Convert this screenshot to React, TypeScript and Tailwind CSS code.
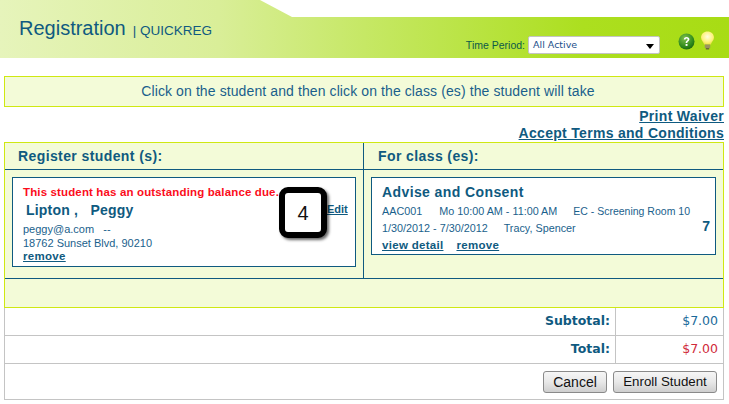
function HelpIcon() {
  return (
    <svg width="17" height="17" viewBox="0 0 17 17">
      <defs>
        <radialGradient id="helpGreen" cx="40%" cy="30%" r="75%">
          <stop offset="0%" stopColor="#7fc04a" />
          <stop offset="70%" stopColor="#2f8a1c" />
          <stop offset="100%" stopColor="#1c6410" />
        </radialGradient>
      </defs>
      <circle cx="8.5" cy="8.5" r="8" fill="url(#helpGreen)" />
      <path d="M5.8 6.6c0-1.6 1.2-2.5 2.8-2.5s2.8.9 2.8 2.3c0 1.900-2.200 1.900-2.200 3.600H7.600c0-2.400 2-2.400 2-3.500 0-.6-.4-1-1-1s-1.100.4-1.100 1.100z" fill="#fff" />
      <rect x="7.6" y="11" width="1.9" height="1.9" fill="#fff" />
    </svg>
  );
}

function BulbIcon() {
  return (
    <svg width="15" height="19" viewBox="0 0 15 19">
      <defs>
        <radialGradient id="bulbGlow" cx="50%" cy="40%" r="60%">
          <stop offset="0%" stopColor="#fffde0" />
          <stop offset="70%" stopColor="#fdf27a" />
          <stop offset="100%" stopColor="#ece04a" />
        </radialGradient>
      </defs>
      <path d="M7.5 0.5c3.7 0 6.5 2.6 6.5 6 0 2.8-2.5 4.3-3.2 7H4.2C3.5 10.800 1 9.300 1 6.500c0-3.400 2.800-6 6.500-6z" fill="url(#bulbGlow)" />
      <rect x="4.800" y="13.500" width="5.400" height="3.500" fill="#9c9360" />
      <rect x="5.800" y="17" width="3.400" height="1.500" fill="#6c6a35" />
    </svg>
  );
}

function Header() {
  return (
    <div className="flex h-[58px] items-start justify-between bg-[linear-gradient(90deg,#e6f4bb_0%,#d9ee98_30%,#c6e865_50%,#acdf1f_80%,#a8dc14_100%)] [clip-path:polygon(0_0,260px_0,292px_17px,100%_17px,100%_100%,0_100%)]">
      <div className="flex items-baseline pt-[16px] pl-[19px] text-[#0f5a80]">
        <span className="text-[20px] leading-[24px]">Registration</span>
        <span className="ml-[7px] text-[13.500px] leading-[24px]">| QUICKREG</span>
      </div>
      <div className="flex items-start pt-[31px] pr-[14px]">
        <span className="mt-[8px] text-[10.500px] leading-[13px] text-[#0d5a48]">Time Period:</span>
        <div className="mt-[5px] ml-[3px] flex h-[18px] w-[132px] items-center justify-between rounded-[2px] border border-[#c4c4c4] bg-white pr-[5px] pl-[4px]">
          <span className="pt-[1px] font-['DejaVu_Sans'] text-[9.500px] text-[#1c4f8a]">All Active</span>
          <span className="mt-[2px] h-0 w-0 border-x-[4px] border-t-[5px] border-x-transparent border-t-black" />
        </div>
        <div className="ml-[18px] flex items-start gap-[5px]">
          <div className="mt-[2px]">
            <HelpIcon />
          </div>
          <BulbIcon />
        </div>
      </div>
    </div>
  );
}

function StudentCard() {
  return (
    <div className="relative h-[90px] border border-[#0f5a80] bg-white pt-[7px] pl-[10px]">
      <p className="text-[11.500px] leading-[14px] font-bold tracking-[0.14px] text-[#fb0d1b]">This student has an outstanding balance due.</p>
      <p className="mt-[2px] pl-[3px] text-[14px] leading-[18px] font-bold tracking-[0.2px] text-[#0f5a80]">
        Lipton ,&nbsp;&nbsp; Peggy
      </p>
      <p className="mt-[3px] text-[11px] leading-[14px] text-[#1a5f8c]">peggy@a.com &nbsp; --</p>
      <p className="text-[11px] leading-[14px] text-[#1a5f8c]">18762 Sunset Blvd, 90210</p>
      <a className="block text-[11.500px] leading-[13px] font-bold tracking-[0.3px] text-[#0f5a80] underline">remove</a>
      <a className="absolute top-[24px] left-[314px] text-[11px] leading-[14px] font-bold text-[#0f5a80] underline">Edit</a>
      <div className="absolute top-[9px] left-[266px] flex h-[51px] w-[48px] items-center justify-center rounded-[9px] border-[6px] border-black bg-white text-[20px] text-[#111] shadow-[2px_2px_3px_rgba(0,0,0,0.6)]">
        4
      </div>
    </div>
  );
}

function ClassCard() {
  return (
    <div className="relative h-[78px] border border-[#0f5a80] bg-white pt-[6px] pl-[10px]">
      <p className="text-[14px] leading-[17px] font-bold tracking-[0.4px] text-[#0f5a80]">Advise and Consent</p>
      <div className="mt-[2px] flex items-baseline text-[10.800px] leading-[17px] text-[#1a5f8c]">
        <span>AAC001</span>
        <span className="ml-[17px]">Mo 10:00 AM - 11:00 AM</span>
        <span className="ml-[16px] text-[10.500px]">EC - Screening Room 10</span>
      </div>
      <div className="flex text-[10.800px] leading-[17px] text-[#1a5f8c]">
        <span>1/30/2012 - 7/30/2012</span>
        <span className="ml-[16px]">Tracy, Spencer</span>
      </div>
      <div className="flex text-[11.500px] leading-[17px] font-bold tracking-[0.3px] text-[#0f5a80]">
        <a className="underline">view detail</a>
        <a className="ml-[13px] underline">remove</a>
      </div>
      <span className="absolute top-[40px] right-[5px] text-[14px] leading-[17px] font-bold text-[#0f5a80]">7</span>
    </div>
  );
}

function TotalRow({ label, value, valueClass }: { label: string; value: string; valueClass: string }) {
  return (
    <div className="flex h-[28px] border-b border-[#c4c4c4] font-['DejaVu_Sans'] text-[12.500px]">
      <div className="flex flex-1 items-center justify-end border-r border-[#c4c4c4] pr-[5px] font-bold text-[#0f5a80]">
        {label}
      </div>
      <div className={`flex w-[107px] items-center justify-end pr-[5px] ${valueClass}`}>{value}</div>
    </div>
  );
}

const buttonClass =
  "flex h-[22px] items-center justify-center rounded-[3px] border border-[#8a8a8a] bg-[linear-gradient(180deg,#f6f6f6_0%,#e8e8e8_50%,#cfcfcf_100%)] text-[#111]";

export default function App() {
  return (
    <div className="h-[404px] w-[729px] overflow-hidden bg-white font-['Liberation_Sans',Arial,sans-serif]">
      <Header />
      <div className="mx-[4px] mt-[18px] w-[720px]">
        <div className="flex h-[31px] items-center justify-center border border-[#cfe812] bg-[#f3fbd8] pl-[8px] text-[14px] tracking-[0.1px] text-[#1a5f8c]">
          Click on the student and then click on the class (es) the student will take
        </div>
        <div className="pt-[1px] text-right text-[14px] leading-[17px] font-bold tracking-[0.3px] text-[#0f5a80]">
          <a className="block underline">Print Waiver</a>
          <a className="block underline">Accept Terms and Conditions</a>
        </div>
        <div className="border border-[#cfe812] bg-[#f3fbd8]">
          <div className="flex h-[27px] border-b border-[#0f5a80] text-[14px] font-bold tracking-[0.4px] text-[#0f5a80]">
            <div className="flex w-[359px] items-center border-r border-[#0f5a80] pl-[13px]">Register student (s):</div>
            <div className="flex flex-1 items-center pl-[14px]">For class (es):</div>
          </div>
          <div className="flex h-[109px] border-b border-[#0f5a80]">
            <div className="w-[359px] border-r border-[#0f5a80] pt-[7px] pr-[7px] pl-[7px]">
              <StudentCard />
            </div>
            <div className="flex-1 pt-[7px] pr-[7px] pl-[7px]">
              <ClassCard />
            </div>
          </div>
          <div className="h-[28px]" />
        </div>
        <div className="border-x border-b border-[#c4c4c4]">
          <TotalRow label="Subtotal:" value="$7.00" valueClass="text-[#1a6a9a]" />
          <TotalRow label="Total:" value="$7.00" valueClass="text-[#d02a3a]" />
          <div className="flex h-[35px] items-start justify-end gap-[6px] pt-[7px] pr-[6px]">
            <button className={`${buttonClass} w-[64px] text-[14px]`}>Cancel</button>
            <button className={`${buttonClass} w-[104px] text-[13.300px]`}>Enroll Student</button>
          </div>
        </div>
      </div>
    </div>
  );
}
